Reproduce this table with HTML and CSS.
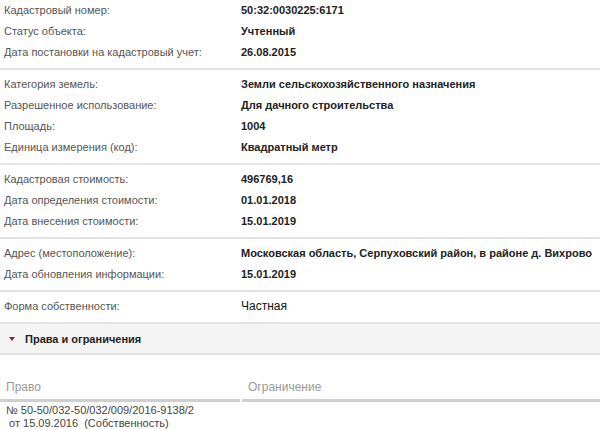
FILE: index.html
```html
<!DOCTYPE html>
<html lang="ru">
<head>
<meta charset="utf-8">
<link rel="stylesheet" href="styles.css">
</head>
<body>
<div class="card">
  <div class="section first">
    <div class="row"><span class="label">Кадастровый номер:</span><span class="value">50:32:0030225:6171</span></div>
    <div class="row"><span class="label">Статус объекта:</span><span class="value">Учтенный</span></div>
    <div class="row"><span class="label">Дата постановки на кадастровый учет:</span><span class="value">26.08.2015</span></div>
  </div>
  <div class="section">
    <div class="row"><span class="label">Категория земель:</span><span class="value">Земли сельскохозяйственного назначения</span></div>
    <div class="row"><span class="label">Разрешенное использование:</span><span class="value">Для дачного строительства</span></div>
    <div class="row"><span class="label">Площадь:</span><span class="value">1004</span></div>
    <div class="row"><span class="label">Единица измерения (код):</span><span class="value">Квадратный метр</span></div>
  </div>
  <div class="section">
    <div class="row"><span class="label">Кадастровая стоимость:</span><span class="value">496769,16</span></div>
    <div class="row"><span class="label">Дата определения стоимости:</span><span class="value">01.01.2018</span></div>
    <div class="row"><span class="label">Дата внесения стоимости:</span><span class="value">15.01.2019</span></div>
  </div>
  <div class="section">
    <div class="row"><span class="label">Адрес (местоположение):</span><span class="value">Московская область, Серпуховский район, в районе д. Вихрово</span></div>
    <div class="row"><span class="label">Дата обновления информации:</span><span class="value">15.01.2019</span></div>
  </div>
  <div class="section">
    <div class="row"><span class="label">Форма собственности:</span><span class="value plain">Частная</span></div>
  </div>
  <div class="band">
    <span class="caret"></span>
    <span class="band-title">Права и ограничения</span>
  </div>
  <div class="rights">
    <div class="rights-head">
      <div class="th">Право</div>
      <div class="th">Ограничение</div>
    </div>
    <div class="rights-row">
      <div class="td">№ 50-50/032-50/032/009/2016-9138/2<br>&nbsp;от 15.09.2016 &nbsp;(Собственность)</div>
      <div class="td"></div>
    </div>
  </div>
</div>
</body>
</html>
```

FILE: styles.css
```css
* { box-sizing: border-box; }
html, body { margin: 0; padding: 0; background: #fff; }
body {
  font-family: "Liberation Sans", Arial, sans-serif;
  font-size: 11px;
  color: #444;
  width: 600px;
  height: 429px;
  overflow: hidden;
}
.card { width: 600px; }
.section {
  padding: 4px 0 5px;
  border-bottom: 2px solid #e3e3e3;
}
.section.first { padding-top: 0; }
.row {
  display: grid;
  grid-template-columns: 241px 1fr;
  line-height: 21px;
  height: 21px;
}
.label {
  padding-left: 4px;
  color: #555;
  white-space: nowrap;
}
.value {
  color: #222;
  font-weight: bold;
  white-space: nowrap;
}
.value.plain {
  font-weight: normal;
  font-size: 12px;
  color: #111;
}
.band {
  background: #f4f4f4;
  border-bottom: 2px solid #e3e3e3;
  height: 31px;
  display: flex;
  align-items: center;
  padding-left: 9px;
}
.caret {
  width: 0;
  height: 0;
  border-left: 3px solid transparent;
  border-right: 3px solid transparent;
  border-top: 4px solid #8a1f45;
  margin-right: 10px;
}
.band-title {
  font-size: 11px;
  color: #1e1e1e;
  font-weight: bold;
}
.rights { padding-top: 22px; }
.rights-head,
.rights-row {
  display: grid;
  grid-template-columns: 240px 1fr;
  column-gap: 2px;
}
.th {
  font-size: 12px;
  color: #999;
  padding: 2px 6px 4px;
  line-height: 16px;
  border-bottom: 3px solid #cfcfcf;
}
.td {
  color: #444;
  padding: 2px 6px 0;
  line-height: 13px;
}
```
